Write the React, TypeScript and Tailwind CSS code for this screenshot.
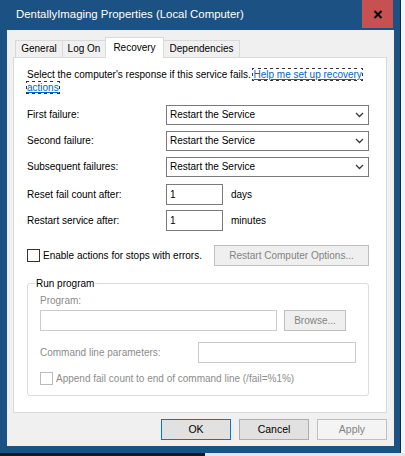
import React from "react";

const Chevron = () => (
  <svg width="9" height="6" viewBox="0 0 9 6" className="shrink-0">
    <path d="M1 1 L4.5 4.5 L8 1" fill="none" stroke="#3a3a3a" strokeWidth="1.3" />
  </svg>
);

function Select() {
  return (
    <div className="h-[20px] w-[203px] border border-[#7a7a7a] bg-white flex items-center pl-[3px] pr-[4px]">
      <span className="flex-1 leading-none">Restart the Service</span>
      <Chevron />
    </div>
  );
}

function SelectRow({ label, className = "" }: { label: string; className?: string }) {
  return (
    <div className={"flex items-center " + className}>
      <span className="w-[139px] leading-none">{label}</span>
      <Select />
    </div>
  );
}

function InputRow({ label, unit, className = "" }: { label: string; unit: string; className?: string }) {
  return (
    <div className={"flex items-center " + className}>
      <span className="w-[139px] leading-none">{label}</span>
      <div className="h-[21px] w-[57px] border border-[#7a7a7a] bg-white flex items-center pl-[3px] leading-none">1</div>
      <span className="ml-[8px] leading-none">{unit}</span>
    </div>
  );
}

export default function App() {
  return (
    <div className="w-[405px] h-[456px] bg-[#ececec] flex flex-col overflow-hidden font-['Liberation_Sans',Arial,sans-serif] text-[10px] text-black">
      <div className="flex h-[453px]">
        <div className="w-[401px] h-[453px] bg-[#1b5283] flex flex-col border-r border-[#0e2c47]">
          {/* Title bar */}
          <div className="h-[30px] flex items-start shrink-0">
            <div className="h-[30px] flex items-center pl-[16px] text-white text-[11.4px] flex-1">
              DentallyImaging Properties (Local Computer)
            </div>
            <div className="w-[31px] h-[28px] bg-[#c75050] mr-[7px] flex items-center justify-center">
              <svg width="10" height="9" viewBox="0 0 10 9">
                <path d="M1.5 1 L8.5 8 M8.5 1 L1.5 8" stroke="#000" strokeWidth="2" />
              </svg>
            </div>
          </div>
          {/* Client */}
          <div className="ml-[7px] w-[387px] h-[416px] bg-[#f0f0f0] flex flex-col">
            {/* Tabs */}
            <div className="mt-[7px] ml-[8px] h-[20px] flex items-end relative z-10">
              <div className="w-[48px] h-[17px] border-l border-t border-r border-[#d9d9d9] bg-[#f0f0f0] flex items-center justify-center leading-none">
                General
              </div>
              <div className="-ml-px w-[44px] h-[17px] border-l border-t border-r border-[#d9d9d9] bg-[#f0f0f0] flex items-center justify-center leading-none">
                Log On
              </div>
              <div className="-ml-px w-[59px] h-[21px] -mb-px border-l border-t border-r border-[#d9d9d9] bg-white flex items-start pt-[5px] justify-center leading-none">
                Recovery
              </div>
              <div className="-ml-px w-[77px] h-[17px] border-l border-t border-r border-[#d9d9d9] bg-[#f0f0f0] flex items-center justify-center leading-none">
                Dependencies
              </div>
            </div>
            {/* Panel */}
            <div className="ml-[6px] w-[374px] h-[356px] border border-[#d9d9d9] bg-white pl-[13px] pr-[17px] pt-[10px] flex flex-col">
              <p className="leading-[13px]">
                Select the computer's response if this service fails.{" "}
                <span className="text-[#0066cc] underline outline-dotted outline-1 outline-[#333]">
                  Help me set up recovery
                  <br />
                  actions
                </span>
              </p>
              <SelectRow label="First failure:" className="mt-[11px]" />
              <SelectRow label="Second failure:" className="mt-[6px]" />
              <SelectRow label="Subsequent failures:" className="mt-[6px]" />
              <InputRow label="Reset fail count after:" unit="days" className="mt-[7px]" />
              <InputRow label="Restart service after:" unit="minutes" className="mt-[5px]" />
              <div className="mt-[14px] flex items-center h-[21px]">
                <div className="w-[13px] h-[13px] border border-[#333] bg-white" />
                <span className="ml-[3px] leading-none">Enable actions for stops with errors.</span>
                <div className="ml-auto w-[155px] h-[21px] border border-[#bfbfbf] bg-[#efefef] text-[#838383] flex items-center justify-center leading-none">
                  Restart Computer Options...
                </div>
              </div>
              <fieldset className="mt-[11px] w-[342px] border border-[#dcdcdc] rounded-[3px] px-[12px] pb-[10px]">
                <legend className="-ml-[5px] px-[1px] leading-[13px]">Run program</legend>
                <div className="mt-[4px] leading-[13px] text-[#8c8c8c]">Program:</div>
                <div className="mt-[3px] flex items-center">
                  <div className="w-[237px] h-[21px] border border-[#cccccc] bg-white" />
                  <div className="ml-[7px] w-[62px] h-[21px] border border-[#bfbfbf] bg-[#efefef] text-[#838383] flex items-center justify-center leading-none">
                    Browse...
                  </div>
                </div>
                <div className="mt-[11px] flex items-center h-[21px]">
                  <span className="w-[158px] leading-none text-[#8c8c8c]">Command line parameters:</span>
                  <div className="w-[158px] h-[21px] border border-[#cccccc] bg-white" />
                </div>
                <div className="mt-[9px] flex items-center h-[13px]">
                  <div className="w-[13px] h-[13px] border border-[#bcbcbc] bg-white" />
                  <span className="ml-[3px] leading-none text-[#8c8c8c]">
                    Append fail count to end of command line (/fail=%1%)
                  </span>
                </div>
              </fieldset>
            </div>
            {/* Buttons */}
            <div className="mt-[6px] w-[380px] flex justify-end gap-[8px]">
              <div className="w-[70px] h-[21px] border border-[#0078d7] bg-[#e1e1e1] flex items-center justify-center leading-none text-[10.5px]">
                OK
              </div>
              <div className="w-[70px] h-[21px] border border-[#adadad] bg-[#e1e1e1] flex items-center justify-center leading-none text-[10.5px]">
                Cancel
              </div>
              <div className="w-[70px] h-[21px] border border-[#bfbfbf] bg-[#f4f4f4] text-[#838383] flex items-center justify-center leading-none text-[10.5px]">
                Apply
              </div>
            </div>
          </div>
        </div>
        <div className="flex-1 bg-[#f5f5f5]" />
      </div>
      <div className="flex h-[3px]">
        <div className="w-[205px] bg-[#1a1a1a]" />
        <div className="flex-1 bg-[#e6e6e6]" />
      </div>
    </div>
  );
}
